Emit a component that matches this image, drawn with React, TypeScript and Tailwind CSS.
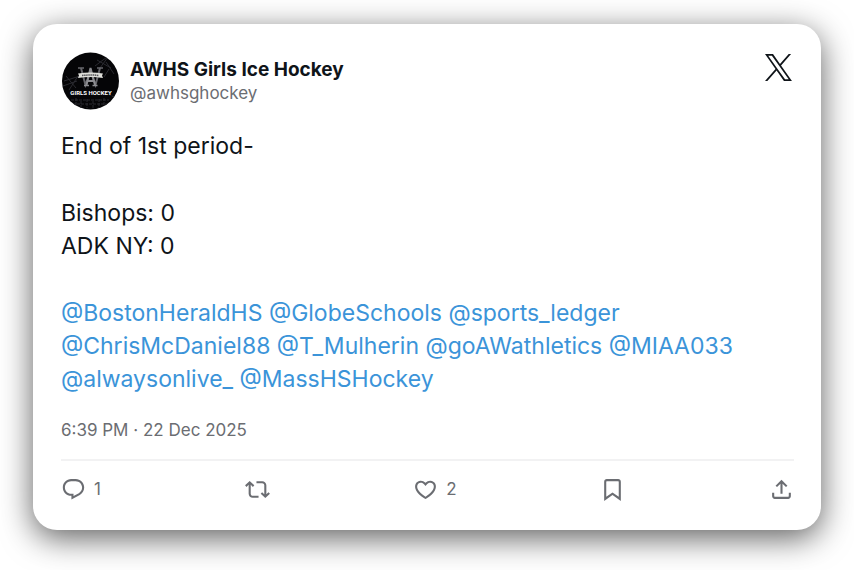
import React from "react";

const mentionLines = [
  ["@BostonHeraldHS", "@GlobeSchools", "@sports_ledger"],
  ["@ChrisMcDaniel88", "@T_Mulherin", "@goAWathletics", "@MIAA033"],
  ["@alwaysonlive_", "@MassHSHockey"],
];

const actions = [
  {
    label: "Reply",
    count: 1,
    path: "M1.751 10c0-4.42 3.584-8 8.005-8h4.366c4.49 0 8.129 3.64 8.129 8.13 0 2.96-1.607 5.68-4.196 7.11l-8.054 4.46v-3.69h-.067c-4.49.1-8.183-3.51-8.183-8.01zm8.005-6c-3.317 0-6.005 2.69-6.005 6 0 3.37 2.77 6.08 6.138 6.01l.351-.01h1.761v2.3l5.087-2.81c1.951-1.08 3.163-3.13 3.163-5.36 0-3.39-2.744-6.13-6.129-6.13H9.756z",
  },
  {
    label: "Repost",
    path: "M4.5 3.88l4.432 4.14-1.364 1.46L5.5 7.55V16c0 1.1.896 2 2 2H13v2H7.5c-2.209 0-4-1.79-4-4V7.55L1.432 9.48.068 8.02 4.5 3.88zM16.5 6H11V4h5.5c2.209 0 4 1.79 4 4v8.45l2.068-1.93 1.364 1.46-4.432 4.14-4.432-4.14 1.364-1.46 2.068 1.93V8c0-1.1-.896-2-2-2z",
  },
  {
    label: "Like",
    count: 2,
    path: "M16.697 5.5c-1.222-.06-2.679.51-3.89 2.16l-.805 1.09-.806-1.09C9.984 6.01 8.526 5.44 7.304 5.5c-1.243.07-2.349.78-2.91 1.91-.552 1.12-.633 2.78.479 4.82 1.074 1.97 3.257 4.27 7.129 6.61 3.87-2.34 6.052-4.64 7.126-6.61 1.111-2.04 1.03-3.7.477-4.82-.561-1.13-1.666-1.84-2.908-1.91zm4.187 7.69c-1.351 2.48-4.001 5.12-8.379 7.67l-.503.3-.504-.3c-4.379-2.55-7.029-5.19-8.382-7.67-1.36-2.5-1.41-4.86-.514-6.67.887-1.79 2.647-2.91 4.601-3.01 1.651-.09 3.368.56 4.798 2.01 1.429-1.45 3.146-2.1 4.796-2.01 1.954.1 3.714 1.22 4.601 3.01.896 1.81.846 4.17-.514 6.67z",
  },
  {
    label: "Bookmark",
    path: "M4 4.5C4 3.12 5.119 2 6.5 2h11C18.881 2 20 3.12 20 4.5v18.44l-8-5.71-8 5.71V4.5zM6.5 4c-.276 0-.5.22-.5.5v14.56l6-4.29 6 4.29V4.5c0-.28-.224-.5-.5-.5h-11z",
  },
  {
    label: "Share",
    path: "M12 2.59l5.7 5.7-1.41 1.42L13 6.41V16h-2V6.41l-3.3 3.3-1.41-1.42L12 2.59zM21 15l-.02 3.51c0 1.38-1.12 2.49-2.5 2.49H5.5C4.11 21 3 19.88 3 18.5V15h2v3.5c0 .28.22.5.5.5h12.98c.28 0 .5-.22.5-.5L19 15h2z",
  },
];

const TeamAvatar = () => (
  <svg viewBox="0 0 58 58" className="size-[58px] shrink-0" role="img" aria-label="AWHS Girls Ice Hockey">
    <defs>
      <clipPath id="avatar">
        <circle cx="29.5" cy="29" r="28.5" />
      </clipPath>
    </defs>
    <g clipPath="url(#avatar)">
      <rect width="58" height="58" fill="#050507" />
      {/* faint rink texture */}
      <g fill="none" stroke="#2b2b31" strokeWidth="1">
        <path d="M34 14l12-9M39 16l8-11M36 8l14 8M45 10l8 12M48 17l-5 8" />
        <path d="M3 29l16-5M5 24l10 12M2 34l14-5M8 38l9-14" />
        <path d="M10 48h38M12 52h34M15 46v9M20 49v8M26 47v9M32 49v8M38 47v9M43 46v8M47 42l6 3" strokeDasharray="3 1" />
      </g>
      {/* W behind A */}
      <g fill="none" stroke="#66666b" strokeWidth="2">
        <path d="M20 16l4.5 17 5-14 5 14 4.5-17" />
        <path d="M17 16h6M36 16h6" strokeWidth="1.5" />
      </g>
      <g fill="none" stroke="#8c8c90" strokeWidth="2">
        <path d="M25.5 33l4-17 4.5 17M27 29h5" />
        <path d="M23 33.5h5M31.5 33.5h5" strokeWidth="1.5" />
      </g>
      <path d="M17 21.5q12.5-2 25 0l-1 2 1 2.500q-12.500-2-25 0l1-2.500z" fill="#deded9" />
      <path d="M21 23.5q8.500-1 17 0" fill="none" stroke="#55555a" strokeWidth="1.5" strokeDasharray="1.5 .6" />
      <text x="30" y="43" textAnchor="middle" fill="#fff" className="font-['Roboto'] text-[6px] font-bold">
        GIRLS HOCKEY
      </text>
    </g>
  </svg>
);

export default function App() {
  return (
    <main className="bg-white px-[33px] pt-6 pb-10 font-['Inter',sans-serif] text-[#0f1419]">
      <article className="rounded-3xl bg-white px-[27px] pt-7 pb-7 pl-7 shadow-[0_8px_32px_rgba(0,0,0,0.63)]">
        <header className="flex items-start">
          <TeamAvatar />
          <div className="ml-[11px] grow pt-1">
            <h1 className="text-[19px] leading-[27px] font-bold">AWHS Girls Ice Hockey</h1>
            <a href="#profile" className="block text-[17px] leading-[21px] text-[#6b6d72]">
              @awhsghockey
            </a>
          </div>
          <svg viewBox="0 0 24 24" className="mt-0.5 mr-0.5 size-[27px] shrink-0" fill="#0f1419" role="img" aria-label="X">
            <path d="M14.258 10.152L23.176 0h-2.113l-7.747 8.813L7.133 0H0l9.352 13.328L0 23.973h2.113l8.176-9.309 6.531 9.309h7.133zm-2.895 3.293l-.949-1.328L2.875 1.56h3.246l6.086 8.523.945 1.328 7.91 11.078h-3.246z" />
          </svg>
        </header>

        <div className="mt-5 text-[23px] leading-[33px]">
          <p>End of 1st period-</p>
          <p className="mt-[34px]">Bishops: 0</p>
          <p>ADK NY: 0</p>
          <div className="mt-[34px]">
            {mentionLines.map((line) => (
              <p key={line[0]}>
                {line.map((handle) => (
                  <React.Fragment key={handle}>
                    <a href={`#${handle}`} className="text-[#3b94d9]">
                      {handle}
                    </a>{" "}
                  </React.Fragment>
                ))}
              </p>
            ))}
          </div>
        </div>

        <time dateTime="2025-12-22T18:39" className="mt-6 block text-[17px] leading-[21px] text-[#6b6d72]">
          6:39 PM · 22 Dec 2025
        </time>

        <footer className="mt-[18px] flex justify-between border-t-2 border-[#f2f2f3] pt-4 text-[#6b6d72]">
          {actions.map(({ label, count, path }) => (
            <button key={label} type="button" aria-label={label} className="flex items-center gap-2 text-[17px] leading-[25px]">
              <svg viewBox="0 0 24 24" className="size-[25px]" fill="currentColor" aria-hidden="true">
                <path d={path} />
              </svg>
              {count && <span>{count}</span>}
            </button>
          ))}
        </footer>
      </article>
    </main>
  );
}
